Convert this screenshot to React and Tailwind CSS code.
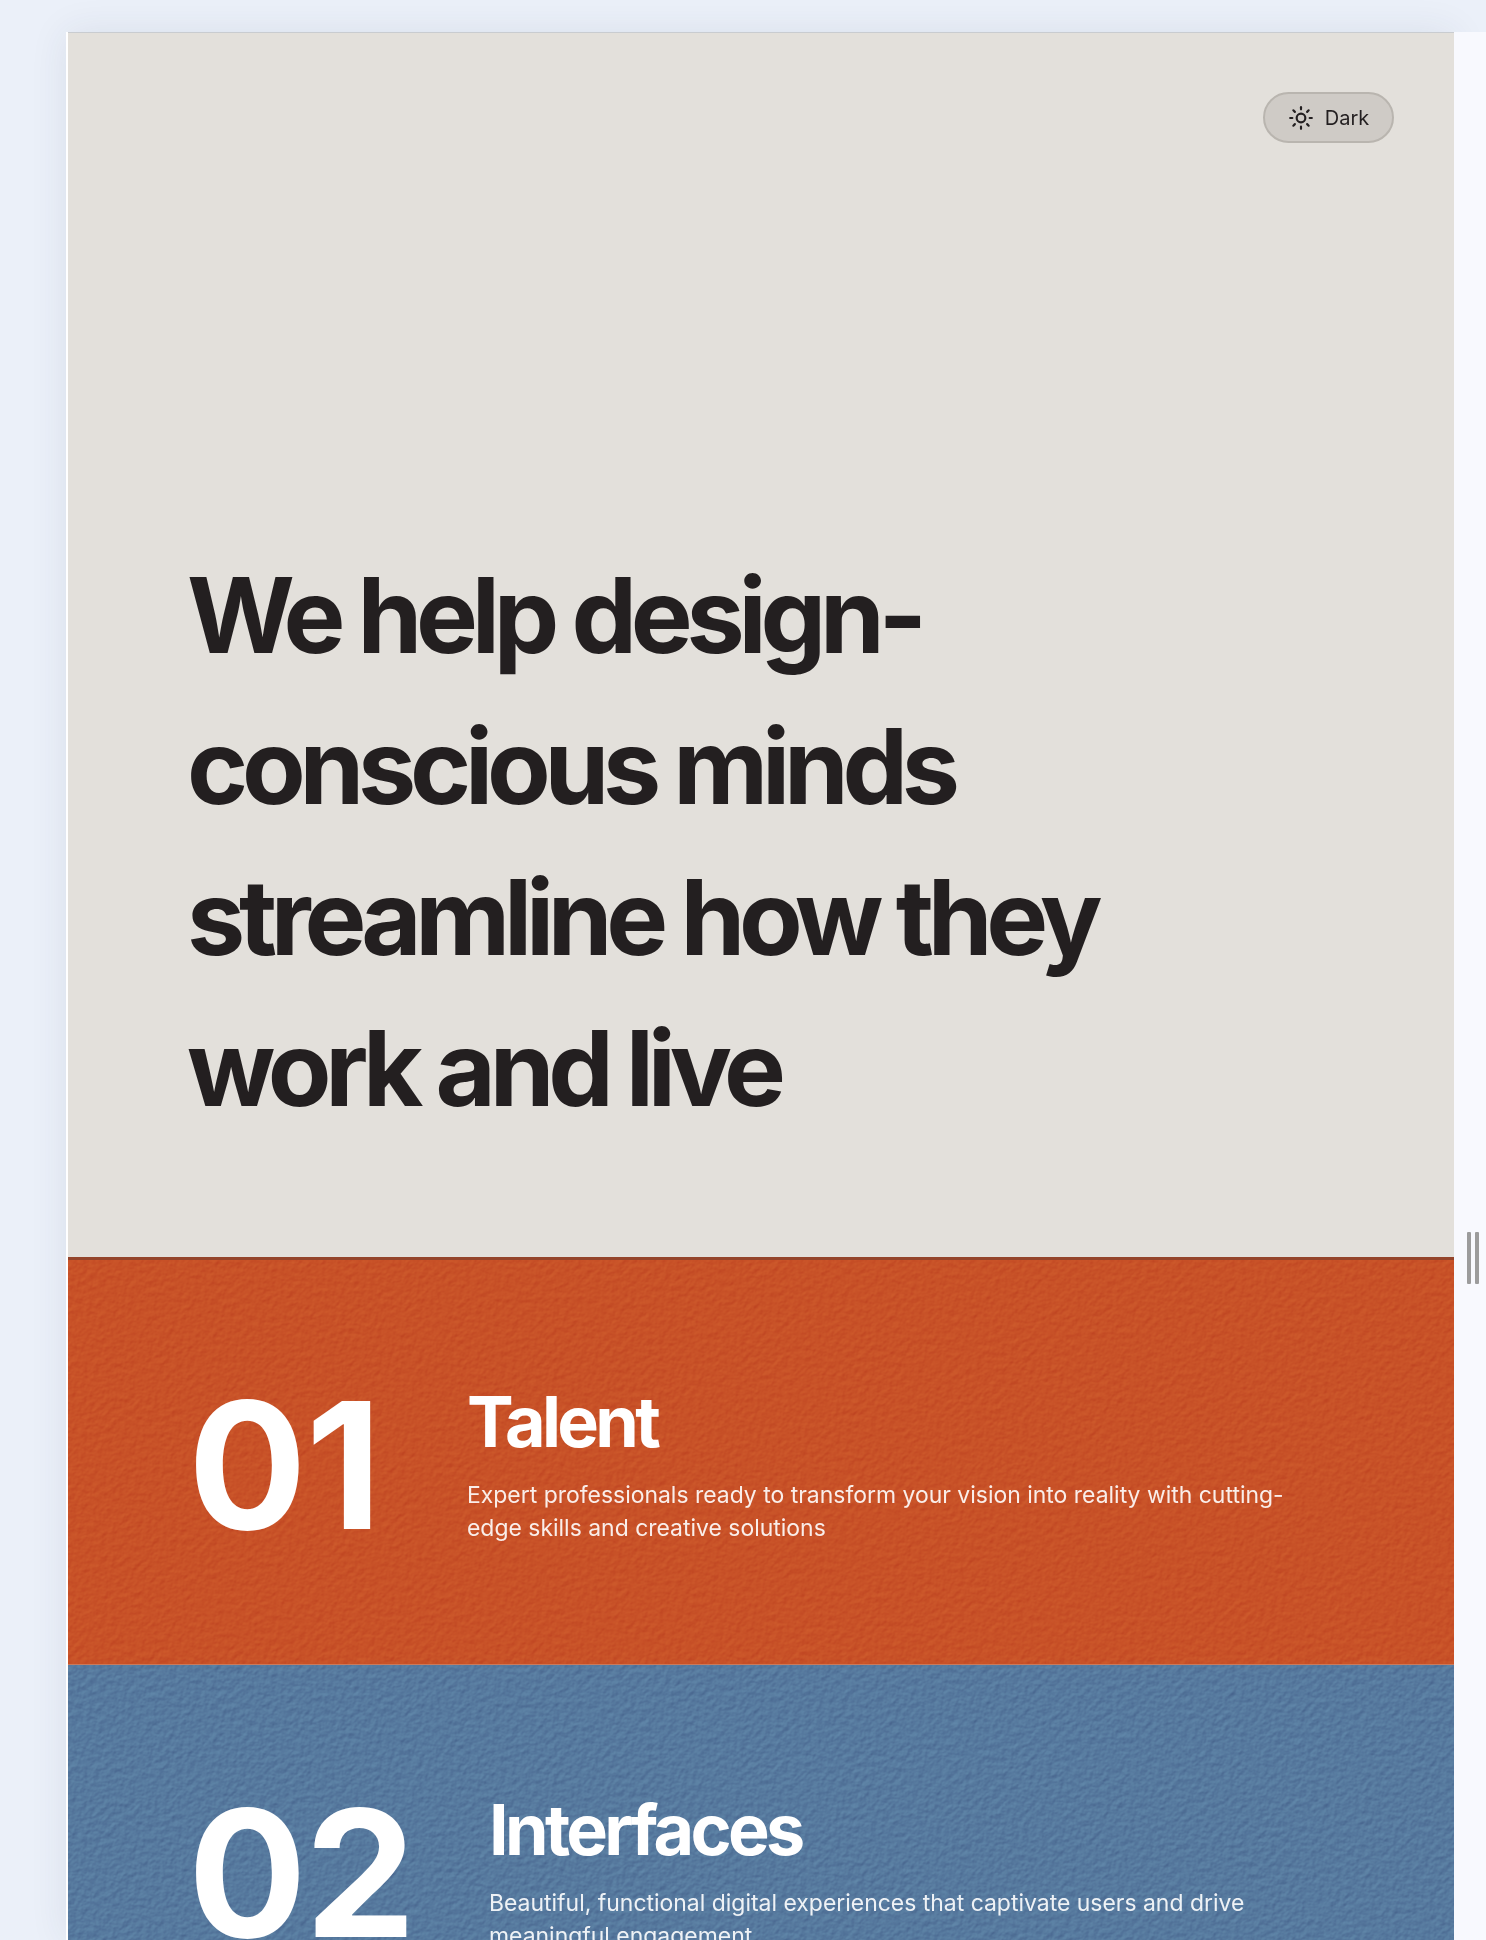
import React from 'react';
import { Sun } from 'lucide-react';

// leather-like grain laid over the coloured sections
const Grain = ({ id }) => (
  <svg className="absolute inset-0 w-full h-full pointer-events-none mix-blend-overlay opacity-[0.18]" aria-hidden="true">
    <filter id={id} x="0" y="0" width="100%" height="100%" colorInterpolationFilters="sRGB">
      <feTurbulence type="fractalNoise" baseFrequency="0.17" numOctaves="3" seed="4" />
      <feColorMatrix type="matrix" values="0 0 0 0 0  0 0 0 0 0  0 0 0 0 0  1 0 0 0 0" result="n" />
      <feDiffuseLighting in="n" surfaceScale="1.2" diffuseConstant="1" lightingColor="#ffffff">
        <feDistantLight azimuth="60" elevation="30" />
      </feDiffuseLighting>
    </filter>
    <rect width="100%" height="100%" filter={`url(#${id})`} />
  </svg>
);

const Feature = ({ id, num, title, text, bg, numClass, topClass }) => (
  <section className={`relative flex items-start pl-[120px] pr-[160px] h-[404px] ${topClass} ${bg}`}>
    <Grain id={id} />
    <div className={`relative shrink-0 text-[176px] leading-[176px] font-bold text-white ${numClass}`}>{num}</div>
    <div className="relative pt-[5px]">
      <h2 className="text-[70px] leading-[80px] font-bold text-white tracking-[-0.052em]">{title}</h2>
      <p className="mt-[17px] text-[22.95px] leading-[33.4px] text-white/90">{text}</p>
    </div>
  </section>
);

const App = () => {
  return (
    <div className="h-screen overflow-hidden bg-[#ebf0f9] font-['Inter',sans-serif] flex pt-[32px] pl-[66px]">
      <main className="w-[1388px] shrink-0 border-l-2 border-white bg-[#e3e0db] shadow-[0_0_36px_rgba(40,50,80,0.09)]">
        {/* Hero */}
        <header className="relative h-[1225px] pl-[119px] pt-[507px] border-t border-[#c9ccd0]">
          <button className="absolute top-[59px] right-[60px] w-[131px] h-[51px] flex items-center justify-center gap-[11px] rounded-full bg-[#cfcbc6] border-2 border-[#b9b5af] text-[20px] text-[#231f20]">
            <Sun size={26} strokeWidth={2} />
            Dark
          </button>
          <h1 className="text-[104px] leading-[151px] font-bold text-[#231f20] tracking-[-0.06em]">
            We help design-<br />
            conscious minds<br />
            streamline how they<br />
            work and live
          </h1>
        </header>

        <div className="h-[3px] bg-[#94442a]" />

        <Feature
          id="grain1"
          num="01"
          title="Talent"
          text={<>Expert professionals ready to transform your vision into reality with cutting-<br />edge skills and creative solutions</>}
          bg="bg-[#c85127]"
          numClass="w-[279px] tracking-[-0.005em]"
          topClass="pt-[117px]"
        />
        <div className="h-px bg-[#c97a5c]" />
        <Feature
          id="grain2"
          num="02"
          title="Interfaces"
          text={<>Beautiful, functional digital experiences that captivate users and drive<br />meaningful engagement</>}
          bg="bg-[#56799e]"
          numClass="w-[301px] tracking-[-0.01em]"
          topClass="pt-[120px]"
        />
      </main>
      {/* right gutter with the resize handle */}
      <aside className="relative z-10 w-[32px] h-full bg-[#f8f9fe]">
        <div className="absolute left-[13px] top-[1200px] flex gap-[4px]">
          <div className="w-[4px] h-[52px] rounded-[1px] bg-[#9c9c9c]" />
          <div className="w-[4px] h-[52px] rounded-[1px] bg-[#9c9c9c]" />
        </div>
      </aside>
    </div>
  );
};

export default App;
